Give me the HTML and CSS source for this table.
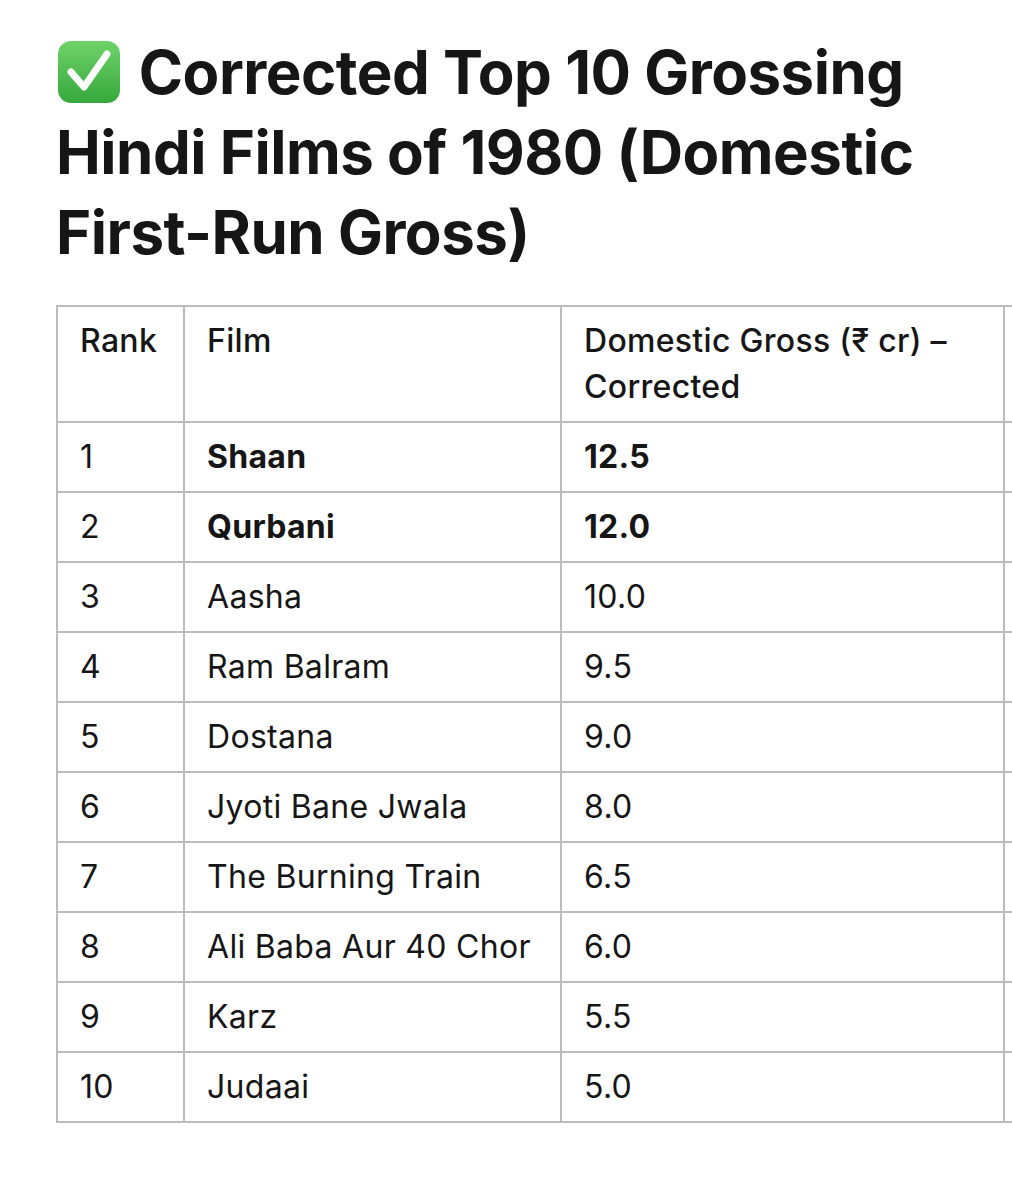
FILE: index.html
```html
<!DOCTYPE html>
<html>
<head>
<meta charset="utf-8">
<link rel="stylesheet" href="styles.css">
</head>
<body>
<div class="page">
  <h1 class="title"><svg class="emoji" viewBox="0 0 64 64" width="64" height="64"><defs><linearGradient id="g" x1="0" y1="0" x2="0" y2="1"><stop offset="0" stop-color="#6fd36a"/><stop offset="1" stop-color="#35a83c"/></linearGradient></defs><rect x="1" y="1" width="62" height="62" rx="13" fill="url(#g)"/><path d="M14 32 L27 47 L50 14" fill="none" stroke="#fff" stroke-width="7" stroke-linecap="round" stroke-linejoin="round"/></svg> Corrected Top 10 Grossing Hindi Films of 1980 (Domestic First-Run Gross)</h1>
  <div class="table-wrap">
    <table class="grid">
      <colgroup>
        <col class="c-rank"><col class="c-film"><col class="c-gross"><col class="c-extra">
      </colgroup>
      <thead>
        <tr><th>Rank</th><th>Film</th><th>Domestic Gross (₹ cr) – Corrected</th><th></th></tr>
      </thead>
      <tbody>
        <tr><td>1</td><td class="b">Shaan</td><td class="b">12.5</td><td></td></tr>
        <tr><td>2</td><td class="b">Qurbani</td><td class="b">12.0</td><td></td></tr>
        <tr><td>3</td><td>Aasha</td><td>10.0</td><td></td></tr>
        <tr><td>4</td><td>Ram Balram</td><td>9.5</td><td></td></tr>
        <tr><td>5</td><td>Dostana</td><td>9.0</td><td></td></tr>
        <tr><td>6</td><td>Jyoti Bane Jwala</td><td>8.0</td><td></td></tr>
        <tr><td>7</td><td>The Burning Train</td><td>6.5</td><td></td></tr>
        <tr><td>8</td><td>Ali Baba Aur 40 Chor</td><td>6.0</td><td></td></tr>
        <tr><td>9</td><td>Karz</td><td>5.5</td><td></td></tr>
        <tr><td>10</td><td>Judaai</td><td>5.0</td><td></td></tr>
      </tbody>
    </table>
  </div>
</div>
</body>
</html>
```

FILE: styles.css
```css
html, body {
  margin: 0;
  padding: 0;
  background: #ffffff;
  overflow: hidden;
}
.page {
  padding: 32px 0 0 56px;
  font-family: Inter, "Liberation Sans", "DejaVu Sans", sans-serif;
  color: #161616;
}
.title {
  margin: 0;
  width: 930px;
  font-size: 60px;
  font-weight: 700;
  line-height: 80px;
  letter-spacing: -0.5px;
}
.emoji {
  display: inline-block;
  vertical-align: -10px;
  margin-left: 1px;
  margin-right: 4px;
}
.table-wrap {
  margin-top: 33px;
  width: 956px;
  overflow: hidden;
}
.grid {
  border-collapse: collapse;
  table-layout: fixed;
  width: 1100px;
  font-size: 32px;
  line-height: 46px;
  letter-spacing: 0.3px;
}
.c-rank { width: 127px; }
.c-film { width: 377px; }
.c-gross { width: 443px; }
.c-extra { width: 153px; }
.grid th, .grid td {
  border: 2px solid #bcbcbc;
  padding: 11px 22px;
  text-align: left;
  vertical-align: top;
}
.grid th {
  font-weight: 500;
}
.grid td {
  font-weight: 400;
  white-space: nowrap;
}
.grid td.b {
  font-weight: 700;
}
```
